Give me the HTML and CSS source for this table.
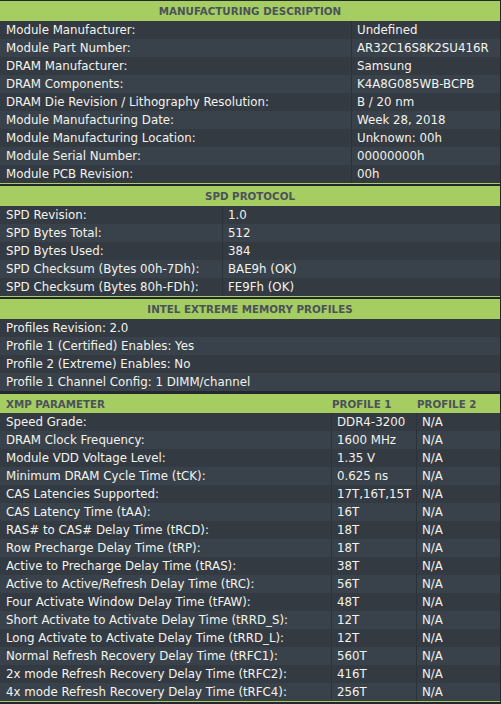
FILE: index.html
```html
<!DOCTYPE html>
<html>
<head>
<meta charset="utf-8">
<link rel="stylesheet" href="styles.css">
</head>
<body>
<div class="page">
  <section class="sec mfg">
    <div class="hdr">MANUFACTURING DESCRIPTION</div>
    <div class="rows">
      <div class="row"><span class="c">Module Manufacturer:</span><span class="c v">Undefined</span></div>
      <div class="row"><span class="c">Module Part Number:</span><span class="c v">AR32C16S8K2SU416R</span></div>
      <div class="row"><span class="c">DRAM Manufacturer:</span><span class="c v">Samsung</span></div>
      <div class="row"><span class="c">DRAM Components:</span><span class="c v">K4A8G085WB-BCPB</span></div>
      <div class="row"><span class="c">DRAM Die Revision / Lithography Resolution:</span><span class="c v">B / 20 nm</span></div>
      <div class="row"><span class="c">Module Manufacturing Date:</span><span class="c v">Week 28, 2018</span></div>
      <div class="row"><span class="c">Module Manufacturing Location:</span><span class="c v">Unknown: 00h</span></div>
      <div class="row"><span class="c">Module Serial Number:</span><span class="c v">00000000h</span></div>
      <div class="row"><span class="c">Module PCB Revision:</span><span class="c v">00h</span></div>
    </div>
  </section>
  <section class="sec spd">
    <div class="hdr">SPD PROTOCOL</div>
    <div class="rows">
      <div class="row"><span class="c">SPD Revision:</span><span class="c v">1.0</span></div>
      <div class="row"><span class="c">SPD Bytes Total:</span><span class="c v">512</span></div>
      <div class="row"><span class="c">SPD Bytes Used:</span><span class="c v">384</span></div>
      <div class="row"><span class="c">SPD Checksum (Bytes 00h-7Dh):</span><span class="c v">BAE9h (OK)</span></div>
      <div class="row"><span class="c">SPD Checksum (Bytes 80h-FDh):</span><span class="c v">FE9Fh (OK)</span></div>
    </div>
  </section>
  <section class="sec xmp">
    <div class="hdr">INTEL EXTREME MEMORY PROFILES</div>
    <div class="rows single">
      <div class="row"><span class="c">Profiles Revision: 2.0</span></div>
      <div class="row"><span class="c">Profile 1 (Certified) Enables: Yes</span></div>
      <div class="row"><span class="c">Profile 2 (Extreme) Enables: No</span></div>
      <div class="row"><span class="c">Profile 1 Channel Config: 1 DIMM/channel</span></div>
    </div>
    <div class="subhdr">
      <span class="sh first">XMP PARAMETER</span><span class="sh">PROFILE 1</span><span class="sh">PROFILE 2</span>
    </div>
    <div class="rows three">
      <div class="row"><span class="c">Speed Grade:</span><span class="c v">DDR4-3200</span><span class="c v">N/A</span></div>
      <div class="row"><span class="c">DRAM Clock Frequency:</span><span class="c v">1600 MHz</span><span class="c v">N/A</span></div>
      <div class="row"><span class="c">Module VDD Voltage Level:</span><span class="c v">1.35 V</span><span class="c v">N/A</span></div>
      <div class="row"><span class="c">Minimum DRAM Cycle Time (tCK):</span><span class="c v">0.625 ns</span><span class="c v">N/A</span></div>
      <div class="row"><span class="c">CAS Latencies Supported:</span><span class="c v">17T,16T,15T</span><span class="c v">N/A</span></div>
      <div class="row"><span class="c">CAS Latency Time (tAA):</span><span class="c v">16T</span><span class="c v">N/A</span></div>
      <div class="row"><span class="c">RAS# to CAS# Delay Time (tRCD):</span><span class="c v">18T</span><span class="c v">N/A</span></div>
      <div class="row"><span class="c">Row Precharge Delay Time (tRP):</span><span class="c v">18T</span><span class="c v">N/A</span></div>
      <div class="row"><span class="c">Active to Precharge Delay Time (tRAS):</span><span class="c v">38T</span><span class="c v">N/A</span></div>
      <div class="row"><span class="c">Active to Active/Refresh Delay Time (tRC):</span><span class="c v">56T</span><span class="c v">N/A</span></div>
      <div class="row"><span class="c">Four Activate Window Delay Time (tFAW):</span><span class="c v">48T</span><span class="c v">N/A</span></div>
      <div class="row"><span class="c">Short Activate to Activate Delay Time (tRRD_S):</span><span class="c v">12T</span><span class="c v">N/A</span></div>
      <div class="row"><span class="c">Long Activate to Activate Delay Time (tRRD_L):</span><span class="c v">12T</span><span class="c v">N/A</span></div>
      <div class="row"><span class="c">Normal Refresh Recovery Delay Time (tRFC1):</span><span class="c v">560T</span><span class="c v">N/A</span></div>
      <div class="row"><span class="c">2x mode Refresh Recovery Delay Time (tRFC2):</span><span class="c v">416T</span><span class="c v">N/A</span></div>
      <div class="row"><span class="c">4x mode Refresh Recovery Delay Time (tRFC4):</span><span class="c v">256T</span><span class="c v">N/A</span></div>
    </div>
  </section>
</div>
</body>
</html>
```

FILE: styles.css
```css
html, body {
  margin: 0;
  padding: 0;
  background: #23282e;
}
body {
  width: 501px;
  height: 704px;
  overflow: hidden;
  font-family: "DejaVu Sans", Verdana, sans-serif;
  font-size: 11.8px;
  color: #f3f3ee;
}
.page {
  width: 500px;
  padding-top: 1px;
}
.sec {
  border-bottom: 1px solid #a5cd62;
  margin-bottom: 2px;
}
.hdr {
  height: 20px;
  line-height: 21px;
  background: #a5cd62;
  color: #4b525a;
  font-weight: bold;
  font-size: 10.3px;
  text-align: center;
}
.row {
  display: grid;
  height: 18px;
  line-height: 19px;
  background: #333a42;
  white-space: nowrap;
}
.row:nth-child(even) {
  background: #39424a;
}
.c {
  padding-left: 6px;
  overflow: hidden;
}
.v {
  border-left: 1px solid #2c3239;
  padding-left: 5px;
}
.mfg .row {
  grid-template-columns: 351px 1fr;
}
.spd .row {
  grid-template-columns: 222px 1fr;
}
.single .row {
  grid-template-columns: 1fr;
}
.three .row {
  grid-template-columns: 331px 85px 1fr;
}
.subhdr {
  display: grid;
  grid-template-columns: 331px 85px 1fr;
  height: 19px;
  line-height: 20px;
  margin-top: 3px;
  background: #a5cd62;
  color: #4b525a;
  font-weight: bold;
  font-size: 10.3px;
}
.sh {
  padding-left: 1px;
}
.sh.first {
  padding-left: 6px;
}
```
